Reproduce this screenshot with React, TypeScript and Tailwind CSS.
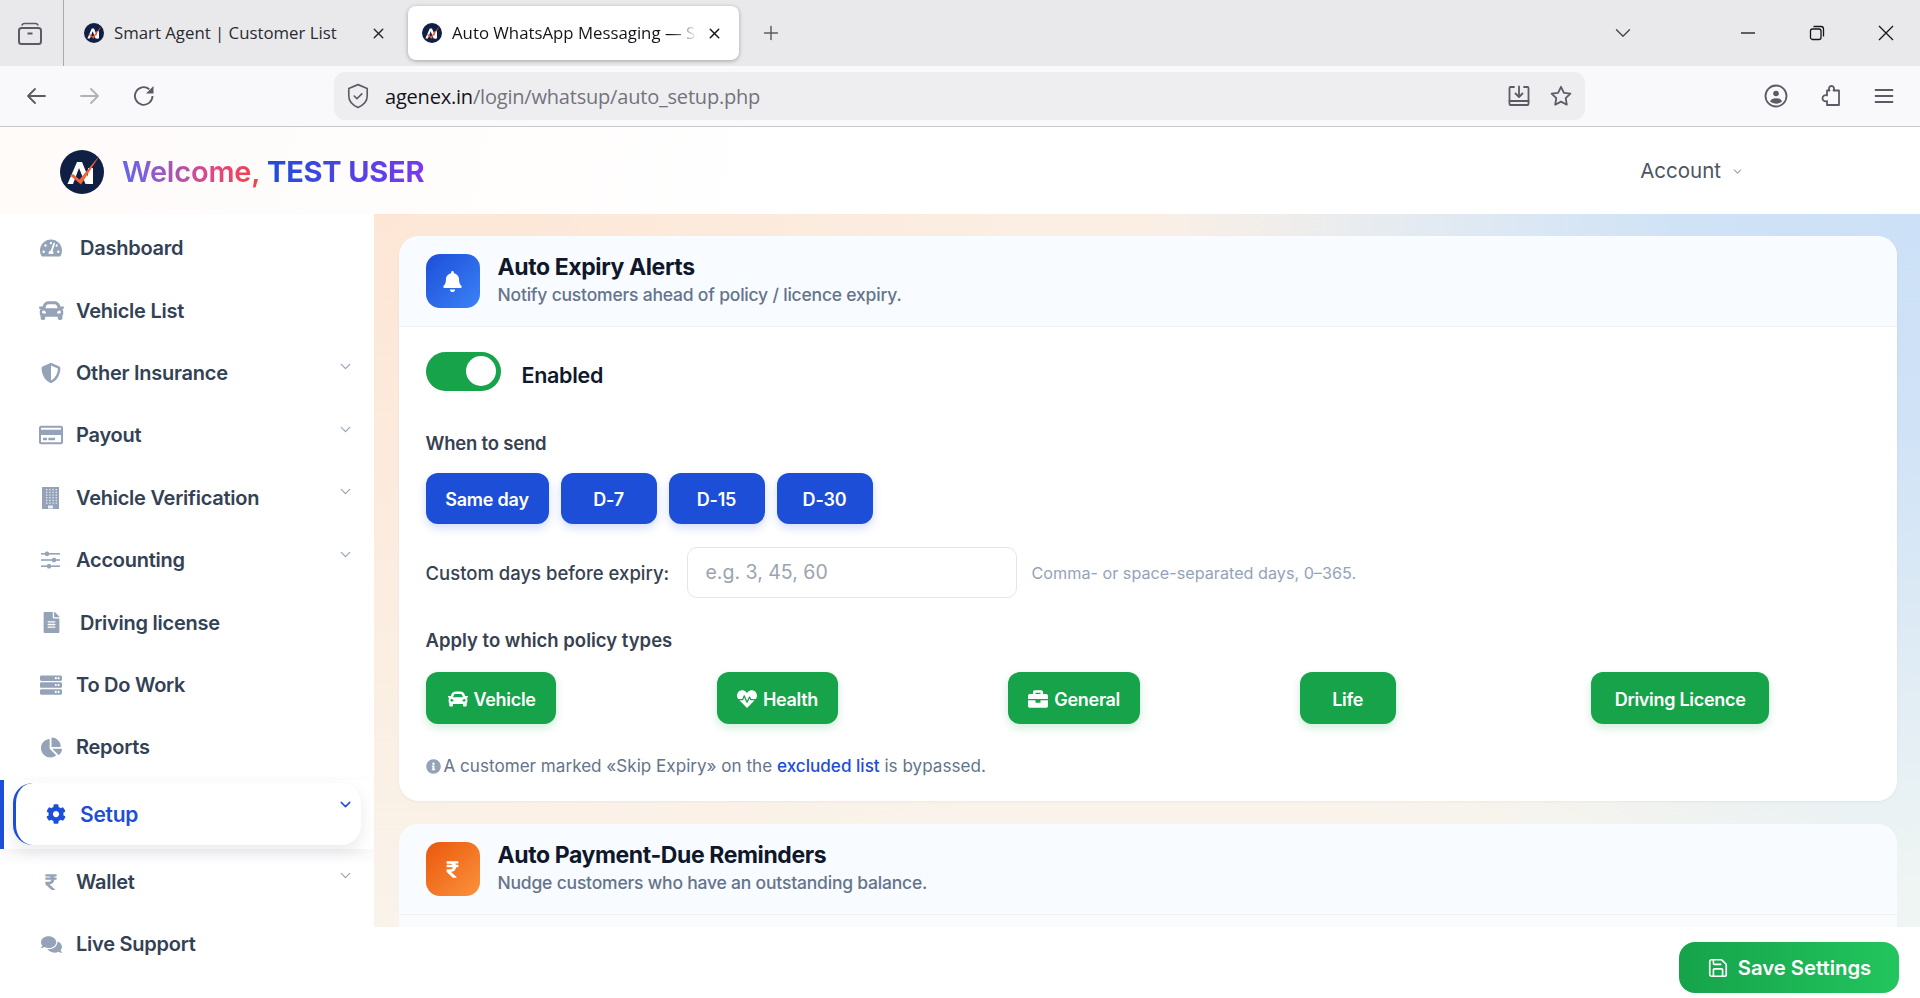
import React from "react";
import { ChevronDown, Plus, Save, X } from "lucide-react";
import {
  FaBell,
  FaBriefcase,
  FaCar,
  FaChartPie,
  FaCog,
  FaComments,
  FaFileAlt,
  FaHeartbeat,
  FaInfoCircle,
  FaRegCreditCard,
  FaRupeeSign,
  FaServer,
  FaTachometerAlt,
} from "react-icons/fa";
import { FaShieldHalved } from "react-icons/fa6";

const ui = "font-['Inter',sans-serif]";

function Logo({ size }: { size: number }) {
  return (
    <svg width={size} height={size} viewBox="0 0 44 44" className="shrink-0">
      <circle cx="22" cy="22" r="22" fill="#0f2044" />
      <path d="M7.500 34 17 12h5l9 22h-5.500l-6.500-16-6 16z" fill="#fff" />
      <path d="M28 18h5v16h-5z" fill="#fff" />
      <path d="M10 25.500l3-1.500 6.500 5.500L40 5 21 34.500z" fill="#f4623a" />
    </svg>
  );
}

function Tool({ children, className = "" }: { children: React.ReactNode; className?: string }) {
  return (
    <svg
      width="24"
      height="24"
      viewBox="0 0 24 24"
      fill="none"
      stroke="#5b5b66"
      strokeWidth="1.8"
      strokeLinecap="round"
      strokeLinejoin="round"
      className={className}
    >
      {children}
    </svg>
  );
}

// building with the tiny window grid, the stock glyph has bigger windows
function BuildingIcon() {
  const dots = [];
  for (let r = 0; r < 6; r++) {
    for (let c = 0; c < 4; c++) {
      dots.push(<rect key={`${r}-${c}`} x={5 + c * 3.200} y={3 + r * 2.700} width="1.400" height="1.300" fill="#fff" fillOpacity="0.75" />);
    }
  }
  return (
    <svg width="20" height="24" viewBox="0 0 20 24">
      <rect x="1" y="1" width="17" height="22" fill="#94a3b8" />
      {dots}
      <rect x="7" y="19.500" width="5" height="3" fill="#fff" fillOpacity="0.8" />
    </svg>
  );
}

function SlidersIcon() {
  return (
    <svg width="22" height="20" viewBox="0 0 22 20" fill="#94a3b8">
      <rect x="1" y="3" width="19" height="1.600" />
      <rect x="5" y="1.500" width="4" height="4.500" rx="1.500" />
      <rect x="1" y="9.200" width="19" height="1.600" />
      <rect x="12" y="7.700" width="4" height="4.500" rx="1.500" />
      <rect x="1" y="15.400" width="19" height="1.600" />
      <rect x="7" y="13.900" width="4" height="4.500" rx="1.500" />
    </svg>
  );
}

function BrowserChrome() {
  return (
    <div className="font-['Open_Sans',sans-serif]">
      <div className="flex h-[66px] items-start bg-[#e9e9ec]">
        <div className="flex h-[66px] w-[64px] items-center border-r border-[#a9a9ae] pl-[17px]">
          <svg width="26" height="26" viewBox="0 0 26 26" fill="none" stroke="#5b5b66" strokeWidth="2">
            <path d="M5 5.500c.3-1.500 1-2 2.500-2h11c1.500 0 2.200.5 2.500 2" strokeWidth="1.700" />
            <rect x="2" y="8" width="22" height="16" rx="2.500" />
            <path d="M10.500 13.500h5" />
          </svg>
        </div>
        <div className="flex h-[66px] w-[344px] items-center pl-[20px] text-[16.800px] text-[#2b2a33]">
          <Logo size={20} />
          <span className="ml-[10px] w-[223px] whitespace-nowrap">Smart Agent | Customer List</span>
          <X className="ml-[33px] h-[17px] w-[17px]" strokeWidth={2} />
        </div>
        <div className="mt-[6px] flex h-[54px] w-[331px] items-center rounded-lg bg-white pl-[14px] text-[16.800px] text-[#15141a] shadow-[0_1px_4px_rgba(0,0,0,0.3)]">
          <Logo size={20} />
          <span className="ml-[10px] w-[248px] overflow-hidden whitespace-nowrap [mask-image:linear-gradient(to_right,black_88%,transparent_99%)]">
            Auto WhatsApp Messaging — Smart Agent
          </span>
          <X className="ml-[6px] h-[17px] w-[17px]" strokeWidth={2} />
        </div>
        <div className="flex h-[66px] w-[66px] items-center pl-[21px]">
          <Plus className="h-[22px] w-[22px] text-[#5b5b66]" strokeWidth={1.6} />
        </div>
        <div className="flex h-[66px] flex-1 items-center text-[#46464e]">
          <ChevronDown className="ml-[805px] h-[26px] w-[26px]" strokeWidth={1.3} />
          <svg width="16" height="16" viewBox="0 0 16 16" className="ml-[104px]" stroke="#15141a" strokeWidth="1.3" fill="none">
            <path d="M1 8h14" />
          </svg>
          <svg width="16" height="16" viewBox="0 0 16 16" className="ml-[53px]" stroke="#15141a" strokeWidth="1.300" fill="none">
            <rect x="1.500" y="4" width="10.500" height="10.500" rx="2" />
            <path d="M4.500 1.500h7.500a2.500 2.500 0 0 1 2.500 2.500v7.500" />
          </svg>
          <svg width="16" height="16" viewBox="0 0 16 16" className="ml-[53px]" stroke="#15141a" strokeWidth="1.300" fill="none">
            <path d="M1 1l14 14M15 1 1 15" />
          </svg>
        </div>
      </div>
      <div className="flex h-[61px] items-center border-b border-[#c8c8cc] bg-[#f9f9fb] pb-px">
        <Tool className="ml-[24px]">
          <path d="M21 12H4M11 5l-7 7 7 7" />
        </Tool>
        <Tool className="ml-[30px] opacity-45">
          <path d="M3 12h17M13 5l7 7-7 7" />
        </Tool>
        <svg width="24" height="24" viewBox="0 0 24 24" fill="none" stroke="#5b5b66" strokeWidth="1.800" className="ml-[30px]">
          <path d="M20.500 12a8.800 8.800 0 1 1-3.200-6.800" />
          <path d="M21.500 2v7.500H14z" fill="#5b5b66" stroke="none" />
        </svg>
        <div className="ml-[178px] flex h-[48px] w-[1251px] items-center rounded-[11px] bg-[#eeeef1] pl-[11px] pr-[12px]">
          <svg width="26" height="26" viewBox="0 0 24 24" fill="none" stroke="#5b5b66" strokeWidth="1.500" strokeLinecap="round" strokeLinejoin="round">
            <path d="M12 1.500 20.500 5v7c0 5.200-3.700 8.500-8.500 10.500C7.200 20.500 3.500 17.200 3.500 12V5z" />
            <path d="M8.500 12l2.500 2.500 4.500-4.500" />
          </svg>
          <span className="ml-[14px] whitespace-nowrap pt-[2px] text-[20px] tracking-[-0.2px] text-[#15141a]">
            agenex.in<span className="text-[#73737c]">/login/whatsup/auto_setup.php</span>
          </span>
          <Tool className="ml-auto">
            <path d="M12 2.500v10M8.500 9.500l3.500 3.500 3.500-3.500" />
            <path d="M7 3H3.500a1 1 0 0 0-1 1v16a1 1 0 0 0 1 1h17a1 1 0 0 0 1-1V4a1 1 0 0 0-1-1H17" />
            <path d="M2.500 17h19" />
          </Tool>
          <Tool className="ml-[18px]">
            <path d="M12 2.800l2.900 6 6.500.900-4.700 4.500 1.100 6.500L12 17.600l-5.800 3.100 1.100-6.500-4.700-4.500 6.500-.900z" />
          </Tool>
        </div>
        <Tool className="ml-[179px]">
          <circle cx="12" cy="12" r="10.500" />
          <circle cx="12" cy="9.500" r="2.800" fill="#5b5b66" stroke="none" />
          <path d="M6 17.500c1-2.500 3-3.300 6-3.300s5 .8 6 3.300a9.500 9.500 0 0 1-12 0z" fill="#5b5b66" stroke="none" />
        </Tool>
        <Tool className="ml-[31px]">
          <path d="M10.500 6.500c-1.500-2.500 0-4.500 2-4.500s3.500 2 2 4.500H20V21H8v-4c-2.500 1-4.500-.5-4.500-2.700S5.500 10.500 8 11.500V6.500z" />
        </Tool>
        <Tool className="ml-[29px]">
          <path d="M3.500 6h17M3.500 12h17M3.500 18h17" />
        </Tool>
      </div>
    </div>
  );
}

function PageHeader() {
  return (
    <div className="flex h-[87px] items-center bg-[linear-gradient(100deg,#fefbf9_0%,#ffffff_45%)] pl-[60px] pt-[2px]">
      <Logo size={44} />
      <div className="ml-[18px] whitespace-nowrap text-[29px] font-bold tracking-[-0.2px]">
        <span className="bg-[linear-gradient(90deg,#6366f1,#e8457c_70%,#ef4444)] bg-clip-text font-semibold text-transparent">
          Welcome,
        </span>{" "}
        <span className="bg-[linear-gradient(90deg,#1d4ed8,#7c3aed)] bg-clip-text text-transparent">TEST USER</span>
      </div>
      <div className="ml-auto mr-[176px] flex items-center text-[20.500px] text-[#4b5563]">
        Account
        <ChevronDown className="ml-[10px] h-[13px] w-[13px] text-[#9ca3af]" strokeWidth={2} />
      </div>
    </div>
  );
}

type NavItem = { label: string; icon: React.ReactNode; wide?: boolean; more?: boolean };

const navTop: NavItem[] = [
  { label: "Dashboard", icon: <FaTachometerAlt size={22} />, wide: true },
  { label: "Vehicle List", icon: <FaCar size={25} /> },
  { label: "Other Insurance", icon: <FaShieldHalved size={20} />, more: true },
  { label: "Payout", icon: <FaRegCreditCard size={24} />, more: true },
  { label: "Vehicle Verification", icon: <BuildingIcon />, more: true },
  { label: "Accounting", icon: <SlidersIcon />, more: true },
  { label: "Driving license", icon: <FaFileAlt size={21} />, wide: true },
  { label: "To Do Work", icon: <FaServer size={22} /> },
  { label: "Reports", icon: <FaChartPie size={21} /> },
];

const navBottom: NavItem[] = [
  { label: "Wallet", icon: <FaRupeeSign size={18} />, more: true },
  { label: "Live Support", icon: <FaComments size={21} /> },
];

function NavRow({ item }: { item: NavItem }) {
  return (
    <div className="flex h-[62.400px] items-center">
      <span className="ml-[36px] flex w-[30px] justify-center text-[#94a3b8]">{item.icon}</span>
      <span className={`text-[20px] font-semibold tracking-[-0.25px] text-[#334155] ${item.wide ? "ml-[14px]" : "ml-[10px]"}`}>
        {item.label}
      </span>
      {item.more && <ChevronDown className="mb-[12px] ml-auto mr-[20px] h-[17px] w-[17px] text-[#94a3b8]" strokeWidth={1.7} />}
    </div>
  );
}

function Sidebar() {
  return (
    <div className="w-[374px] shrink-0 bg-white pt-[3px]">
      {navTop.map((item) => (
        <NavRow key={item.label} item={item} />
      ))}
      <div className="mt-px flex h-[69px] items-center border-l-4 border-[#1d4ed8] pl-[9px] pr-[13px] shadow-[0_6px_14px_rgba(15,23,42,0.05)]">
        <div className="flex h-[62px] w-full items-center rounded-[20px] border-l-[3px] border-[#1d4ed8] bg-white pl-[30px] shadow-[0_6px_16px_rgba(15,23,42,0.09)]">
          <FaCog size={20} className="text-[#1d4ed8]" />
          <span className="ml-[14px] pt-[2px] text-[21px] font-semibold tracking-[-0.25px] text-[#1d4ed8]">Setup</span>
          <ChevronDown className="mb-[20px] ml-auto mr-[7px] h-[17px] w-[17px] text-[#1d4ed8]" strokeWidth={2} />
        </div>
      </div>
      <div className="pt-[2px]">
        {navBottom.map((item) => (
          <NavRow key={item.label} item={item} />
        ))}
      </div>
    </div>
  );
}

function CardHead({
  title,
  sub,
  icon,
  iconClass,
}: {
  title: string;
  sub: string;
  icon: React.ReactNode;
  iconClass: string;
}) {
  return (
    <div className="flex h-[91px] items-center gap-[18px] border-b border-[#edf0f4] bg-[#f8fbff] pl-[26.500px]">
      <div className={`flex h-[54px] w-[54px] items-center justify-center rounded-[14px] text-white ${iconClass}`}>{icon}</div>
      <div className="pb-[2px]">
        <div className="text-[23px] font-bold leading-[30px] tracking-[-0.4px] text-[#0f172a]">{title}</div>
        <div className="text-[17.500px] font-medium leading-[26px] tracking-[-0.2px] text-[#64748b]">{sub}</div>
      </div>
    </div>
  );
}

const days = ["Same day", "D-7", "D-15", "D-30"];
const policies = [
  { label: "Vehicle", icon: FaCar, w: "w-[130px] pl-[22px]" },
  { label: "Health", icon: FaHeartbeat, w: "w-[121px] pl-[20px]" },
  { label: "General", icon: FaBriefcase, w: "w-[132px] pl-[20px]" },
  { label: "Life", w: "w-[96px] justify-center" },
  { label: "Driving Licence", w: "w-[178px] justify-center" },
];

function ExpiryCard() {
  return (
    <div className="overflow-hidden rounded-[20px] bg-white shadow-[0_1px_3px_rgba(15,23,42,0.05)]">
      <CardHead
        title="Auto Expiry Alerts"
        sub="Notify customers ahead of policy / licence expiry."
        icon={<FaBell size={21} />}
        iconClass="bg-[linear-gradient(135deg,#1d4ed8,#3b82f6)]"
      />
      <div className="px-[26.500px] pt-[24px]">
        <div className="flex items-center gap-[21px]">
          <div className="flex h-[39px] w-[75px] items-center justify-end rounded-full bg-[#16a34a] pr-[5px]">
            <div className="h-[30px] w-[30px] rounded-full bg-white" />
          </div>
          <span className="mt-[8px] text-[21.500px] font-semibold tracking-[-0.3px] text-[#0f172a]">Enabled</span>
        </div>
        <div className="mt-[39px] text-[18.500px] font-semibold leading-[26px] tracking-[-0.2px] text-[#374151]">When to send</div>
        <div className="mt-[17px] flex gap-3">
          {days.map((d) => (
            <div
              key={d}
              className={`flex h-[51px] items-center justify-center rounded-xl bg-[#1d4ed8] pt-[2px] text-[18px] font-semibold tracking-[-0.2px] text-white shadow-[0_4px_10px_rgba(29,78,216,0.2)] ${
                d === "Same day" ? "w-[123px]" : "w-[96px]"
              }`}
            >
              {d}
            </div>
          ))}
        </div>
        <div className="mt-[23px] flex items-center">
          <span className="w-[245px] whitespace-nowrap pt-[2px] text-[18.500px] font-medium text-[#374151]">Custom days before expiry:</span>
          <div className="ml-[16px] flex h-[51px] w-[330px] items-center rounded-[10px] border border-[#e2e5ea] bg-white pl-[18px] text-[19.500px] text-[#9ca3af]">
            e.g. 3, 45, 60
          </div>
          <span className="ml-[15px] text-[16.200px] text-[#94a3b8]">Comma- or space-separated days, 0–365.</span>
        </div>
        <div className="mt-[29px] text-[18.500px] font-semibold leading-[26px] text-[#374151]">Apply to which policy types</div>
        <div className="mt-[19px] grid grid-cols-5 justify-items-start gap-3">
          {policies.map((p) => (
            <div
              key={p.label}
              className={`flex h-[52px] items-center rounded-xl bg-[#16a34a] pt-[2px] text-[18px] font-semibold tracking-[-0.3px] text-white shadow-[0_4px_10px_rgba(22,163,74,0.2)] ${p.w}`}
            >
              {p.icon && <p.icon size={20} className="mr-[6px]" />}
              {p.label}
            </div>
          ))}
        </div>
        <div className="mt-[32px] flex items-center pb-[25px] text-[17.100px] leading-[20px] text-[#64748b]">
          <FaInfoCircle size={15} className="mr-[3px] text-[#94a3b8]" />
          <span>
            A customer marked «Skip Expiry» on the <span className="font-medium text-[#1d4ed8]">excluded list</span> is bypassed.
          </span>
        </div>
      </div>
    </div>
  );
}

export default function App() {
  return (
    <div className={`flex h-[998px] w-[1920px] flex-col overflow-hidden bg-white ${ui}`}>
      <BrowserChrome />
      <PageHeader />
      <div className="flex min-h-0 flex-1">
        <Sidebar />
        <div className="flex min-w-0 flex-1 flex-col">
          <div className="min-h-0 flex-1 overflow-hidden bg-[radial-gradient(ellipse_50%_95%_at_100%_0%,#cce0f7_0%,#cfe2f6_30%,rgba(207,226,246,0)_100%),radial-gradient(ellipse_70%_100%_at_0%_0%,#fde6d5_0%,rgba(253,230,213,0)_100%),linear-gradient(90deg,#f9f3ea,#faf3eb_60%,#eff5f3)] pl-[25px] pr-[23px] pt-[22px]">
            <ExpiryCard />
            <div className="mt-[23px] overflow-hidden rounded-t-[20px] bg-white">
              <CardHead
                title="Auto Payment-Due Reminders"
                sub="Nudge customers who have an outstanding balance."
                icon={<FaRupeeSign size={19} />}
                iconClass="bg-[linear-gradient(135deg,#ea580c,#fb923c)]"
              />
              <div className="h-[12px] bg-[#fafbfd]" />
            </div>
          </div>
          <div className="flex h-[71px] shrink-0 items-start justify-end bg-white pr-[21px] pt-[15px]">
            <div className="flex h-[51px] w-[220px] items-center justify-center gap-[9px] rounded-2xl bg-[linear-gradient(90deg,#16a34a,#22c55e)] text-[20.300px] font-semibold text-white">
              <Save size={22} strokeWidth={1.8} />
              <span className="pt-[2px]">Save Settings</span>
            </div>
          </div>
        </div>
      </div>
    </div>
  );
}
